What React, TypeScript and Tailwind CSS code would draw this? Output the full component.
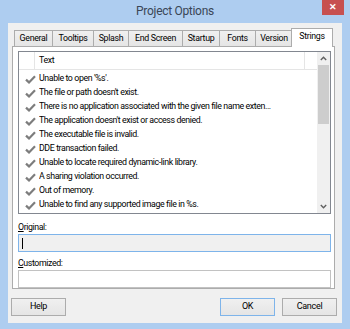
import React from 'react';

const tabs = [
  { label: 'General', w: 'w-[39px]' },
  { label: 'Tooltips', w: 'w-[42px]' },
  { label: 'Splash', w: 'w-[36px]' },
  { label: 'End Screen', w: 'w-[55px]' },
  { label: 'Startup', w: 'w-[38px]' },
  { label: 'Fonts', w: 'w-[37px]' },
  { label: 'Version', w: 'w-[38px]' },
];

const rows = [
  "Unable to open '%s'.",
  "The file or path doesn't exist.",
  'There is no application associated with the given file name exten...',
  "The application doesn't exist or access denied.",
  'The executable file is invalid.',
  'DDE transaction failed.',
  'Unable to locate required dynamic-link library.',
  'A sharing violation occurred.',
  'Out of memory.',
  'Unable to find any supported image file in %s.',
];

const Check = () => (
  <svg width="11" height="9" viewBox="0 0 11 9" className="shrink-0">
    <path d="M1 4.6 L4 7.4 L10 1.2" fill="none" stroke="#7d7d7d" strokeWidth="2.2" strokeLinejoin="miter" />
  </svg>
);

const Button: React.FC<{ label: string; primary?: boolean; className?: string }> = ({ label, primary, className }) => (
  <div
    className={`w-[55px] h-[18px] flex items-center justify-center text-[9px] tracking-[-0.3px] text-black bg-gradient-to-b from-[#f0f0f0] to-[#e5e5e5] border ${
      primary ? 'border-[#7eb4ea]' : 'border-[#acacac]'
    } ${className ?? ''}`}
  >
    {label}
  </div>
);

export default function App() {
  return (
    <div
      className="relative w-[350px] h-[329px] bg-[#aecdf0] flex flex-col overflow-hidden"
      style={{ fontFamily: 'Roboto, "Noto Sans", "Liberation Sans", sans-serif' }}
    >
      {/* title bar */}
      <div className="h-[23px] flex items-center justify-center text-[12px] tracking-[-0.3px] text-[#3a4656] pb-[1px]">
        Project Options
      </div>
      <div className="absolute top-0 right-[6px] w-[22px] h-[15px] bg-[#c75050] flex items-center justify-center text-white text-[9px] font-bold leading-none">
        ✕
      </div>

      {/* client */}
      <div className="mx-[8px] mb-[6px] flex-1 bg-[#f0f0f0] flex flex-col">
        {/* tabs */}
        <div className="flex items-end ml-[6px] mt-[5px] h-[18px] relative z-10 text-[8.8px] tracking-[-0.3px] text-black">
          {tabs.map((t, i) => (
            <div
              key={t.label}
              className={`${t.w} ${i > 0 ? '-ml-px' : ''} h-[16px] flex items-center justify-center border border-b-0 border-[#acacac] bg-gradient-to-b from-[#f0f0f0] to-[#e5e5e5] whitespace-nowrap`}
            >
              {t.label}
            </div>
          ))}
          <div className="w-[42px] -ml-[2px] h-[19px] flex items-center justify-center border border-b-0 border-[#acacac] bg-white whitespace-nowrap pb-[2px] -mb-px">
            Strings
          </div>
        </div>

        {/* panel */}
        <div className="ml-[4px] w-[323px] h-[243px] border border-[#acacac] bg-white pl-[5px] pr-[3px] pt-[4px] flex flex-col text-[8.8px] tracking-[-0.4px] text-black">
          {/* list */}
          <div className="h-[163px] border border-[#828790] flex">
            <div className="flex-1 min-w-0 flex flex-col">
              <div className="h-[18px] flex items-center border-b border-[#e5e5e5]">
                <div className="w-[16px] h-full border-r border-[#e5e5e5]" />
                <div className="flex-1 pl-[4px]">Text</div>
                <div className="w-[13px] h-full border-l border-[#e5e5e5]" />
              </div>
              <div className="pt-[2px] flex flex-col">
                {rows.map((r) => (
                  <div key={r} className="h-[14px] flex items-center">
                    <div className="w-[20px] flex justify-center pl-[2px]">
                      <Check />
                    </div>
                    <div className="flex-1 min-w-0 whitespace-nowrap overflow-hidden">{r}</div>
                  </div>
                ))}
              </div>
            </div>
            {/* scrollbar */}
            <div className="w-[13px] bg-[#f0f0f0] flex flex-col items-center">
              <div className="h-[13px] w-full flex items-center justify-center">
                <svg width="7" height="5" viewBox="0 0 7 5">
                  <path d="M0.8 4 L3.5 1.3 L6.2 4" fill="none" stroke="#606060" strokeWidth="1.4" />
                </svg>
              </div>
              <div className="w-[11px] h-[59px] bg-[#cdcdcd]" />
              <div className="flex-1" />
              <div className="h-[13px] w-full flex items-center justify-center">
                <svg width="7" height="5" viewBox="0 0 7 5">
                  <path d="M0.8 1 L3.5 3.7 L6.2 1" fill="none" stroke="#606060" strokeWidth="1.4" />
                </svg>
              </div>
            </div>
          </div>

          <div className="mt-[7px] h-[13px] leading-[13px]">
            <span className="underline underline-offset-1">O</span>riginal:
          </div>
          <div className="h-[18px] border border-[#7eb4ea] bg-[#f0f0f0] flex items-center pl-[3px]">
            <div className="w-px h-[11px] bg-black" />
          </div>

          <div className="mt-[5px] h-[13px] leading-[13px]">
            <span className="underline underline-offset-1">C</span>ustomized:
          </div>
          <div className="h-[18px] border border-[#c2c2c2] bg-white" />
        </div>

        {/* buttons */}
        <div className="flex mt-[9px] ml-[3px] mr-[5px]">
          <Button label="Help" />
          <div className="flex-1" />
          <Button label="OK" primary />
          <Button label="Cancel" className="ml-[7px]" />
        </div>
      </div>
    </div>
  );
}
